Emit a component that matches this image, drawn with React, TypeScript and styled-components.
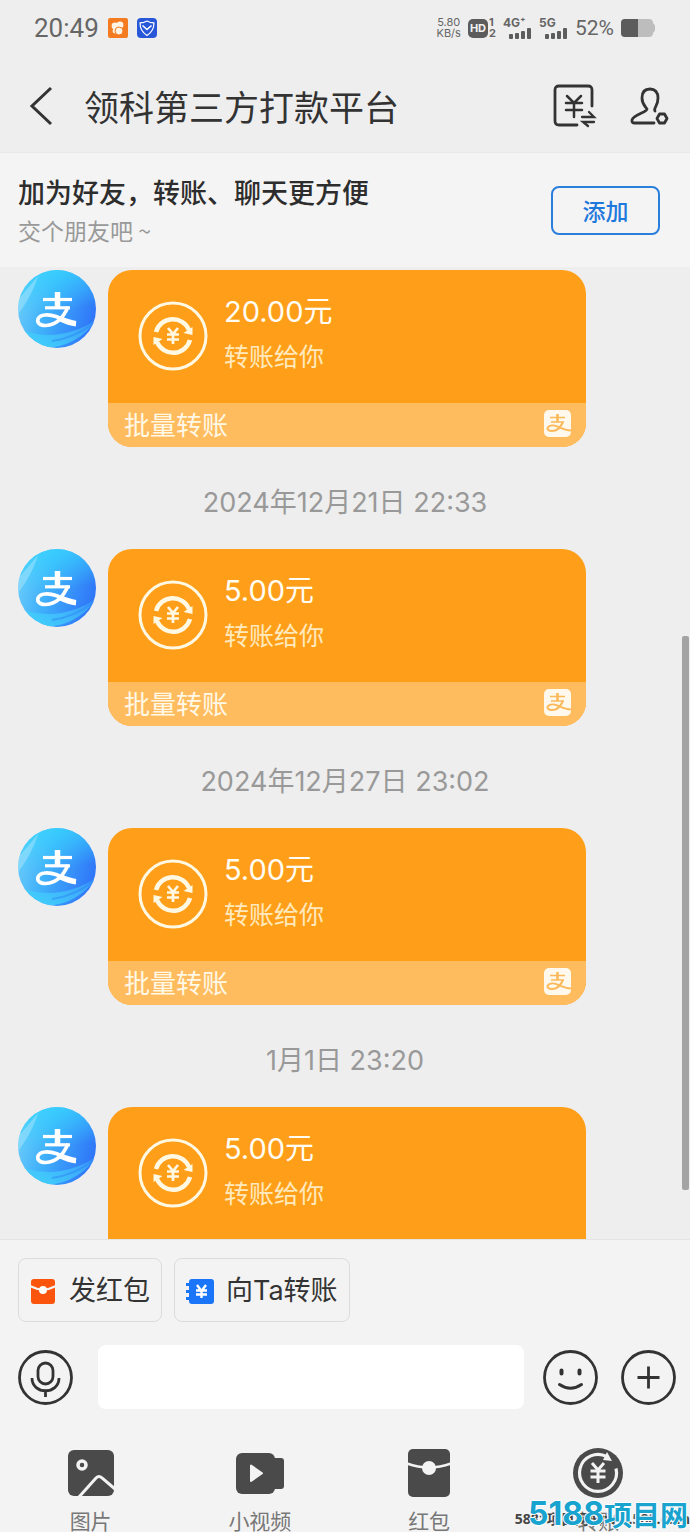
import React from "react";
import styled, { createGlobalStyle } from "styled-components";

const GlobalStyle = createGlobalStyle`
  *, *::before, *::after { box-sizing: border-box; }
  body {
    margin: 0;
    background: #eeeeee;
    color: #333333;
    font-family: "Noto Sans CJK SC", sans-serif;
  }
  button, input { font: inherit; color: inherit; }
  svg { display: block; flex: none; }
`;

const Screen = styled.div`
  position: relative;
  display: flex;
  flex-direction: column;
  height: 100vh;
  overflow: hidden;
`;

/* ---------- status bar ---------- */

const StatusBar = styled.div`
  display: flex;
  align-items: center;
  justify-content: space-between;
  flex: none;
  height: 56px;
  padding: 0 34px;
  color: #666666;
  font-family: Roboto, sans-serif;
`;

const StatusGroup = styled.div<{ $gap: number }>`
  display: flex;
  align-items: center;
  gap: ${(p) => p.$gap}px;
`;

const Clock = styled.time`
  font-size: 26px;
  line-height: 32px;
`;

const Speed = styled.div`
  display: flex;
  flex-direction: column;
  align-items: center;
  font-family: Inter, sans-serif;
  font-size: 11px;
  line-height: 11px;
`;

const HdGroup = styled.div`
  display: flex;
  align-items: center;
  gap: 1px;
  font-family: Inter, sans-serif;
  font-weight: 700;
`;

const HdBadge = styled.span`
  padding: 0 2px;
  border-radius: 5px;
  background: #5c5c5c;
  color: #f2f2f2;
  font-size: 11px;
  line-height: 19px;
`;

const SimNumbers = styled.span`
  display: flex;
  flex-direction: column;
  font-size: 11px;
  line-height: 11px;
`;

const Signal = styled.div`
  display: flex;
  flex-direction: column;
  width: 29px;
  font-family: Inter, sans-serif;
  font-size: 12px;
  font-weight: 700;
  line-height: 10px;

  svg { align-self: flex-end; }
`;

const Percent = styled.span`
  font-size: 21px;
  line-height: 24px;
`;

/* ---------- header ---------- */

const Header = styled.header`
  display: flex;
  align-items: center;
  flex: none;
  height: 97px;
  padding: 4px 20px 0 28px;
  border-bottom: 1px solid #e9e9e9;
`;

const IconButton = styled.button`
  display: flex;
  flex: none;
  padding: 0;
  border: 0;
  background: none;
`;

const Title = styled.h1`
  flex: 1;
  margin: 0 0 0 29px;
  font-size: 35px;
  font-weight: 400;
  line-height: 48px;
  white-space: nowrap;
`;

const HeaderActions = styled.div`
  display: flex;
  align-items: center;
  gap: 33px;
`;

/* ---------- add-friend banner ---------- */

const Banner = styled.section`
  display: flex;
  align-items: center;
  justify-content: space-between;
  flex: none;
  height: 114px;
  padding: 0 30px 0 18px;
  background: #f4f4f4;
`;

const BannerTitle = styled.p`
  margin: 0;
  font-size: 27px;
  font-weight: 500;
  line-height: 40px;
  color: #2d2d2d;
`;

const BannerNote = styled.p`
  margin: 0;
  font-size: 23px;
  line-height: 36px;
  color: #999999;
`;

const AddButton = styled.button`
  width: 109px;
  height: 49px;
  padding: 0;
  border: 2px solid #2b7fdc;
  border-radius: 8px;
  background: none;
  color: #1f78dc;
  font-size: 23px;
  font-weight: 500;
  line-height: 36px;
`;

/* ---------- conversation ---------- */

const Chat = styled.main`
  position: relative;
  flex: 1;
  min-height: 0;
  padding: 3px 104px 0 18px;
  overflow: hidden;
`;

const DateLine = styled.div`
  height: 102px;
  margin-right: -86px;
  padding-top: 36px;
  color: #999999;
  font-family: Inter, "Noto Sans CJK SC", sans-serif;
  font-size: 27px;
  line-height: 40px;
  text-align: center;
`;

const Message = styled.article`
  display: flex;
  align-items: flex-start;
  gap: 12px;
`;

const Card = styled.div`
  flex: 1;
  overflow: hidden;
  border-radius: 24px;
  background: #ff9f19;
  color: #fff8e6;
`;

const CardBody = styled.div`
  display: flex;
  gap: 16px;
  height: 133px;
  padding: 22px 30px 0;

  svg { margin-top: 9px; }
`;

const Amount = styled.p`
  margin: 0;
  font-family: Inter, "Noto Sans CJK SC", sans-serif;
  font-size: 29px;
  line-height: 40px;
  color: #fffdf4;
`;

const Note = styled.p`
  margin: 4px 0 0;
  font-size: 25px;
  line-height: 38px;
  color: #ffe9bd;
`;

const CardFooter = styled.div`
  display: flex;
  align-items: center;
  justify-content: space-between;
  height: 44px;
  padding: 0 15px 3px 16px;
  background: #ffbc5e;
  font-size: 26px;
  line-height: 40px;
`;

const ScrollThumb = styled.div`
  position: absolute;
  top: 38%;
  right: 1px;
  width: 7px;
  height: 57%;
  border-radius: 2px;
  background: #a3a3a3;
`;

/* ---------- composer ---------- */

const Composer = styled.footer`
  flex: none;
  padding: 18px 14px 0 18px;
  border-top: 1px solid #e4e4e4;
  background: #f3f3f3;
`;

const QuickActions = styled.div`
  display: flex;
  gap: 12px;
`;

const QuickButton = styled.button`
  display: flex;
  align-items: center;
  gap: 12px;
  height: 64px;
  padding: 2px 11px 0;
  border: 1px solid #dcdcdc;
  border-radius: 8px;
  background: none;
  font-family: Inter, "Noto Sans CJK SC", sans-serif;
  font-size: 27px;
  line-height: 40px;
`;

const InputRow = styled.form`
  display: flex;
  align-items: center;
  gap: 23px;
  margin-top: 23px;
`;

const MessageInput = styled.input`
  flex: 1;
  min-width: 0;
  height: 64px;
  margin: 0 -4px 0 2px;
  padding: 0 16px;
  border: 0;
  border-radius: 8px;
  background: #ffffff;
  font-size: 27px;
`;

const Tools = styled.nav`
  display: grid;
  grid-template-columns: repeat(4, 1fr);
  height: 123px;
  margin: 0 -7px 0 -12px;
  padding-top: 39px;
`;

const Tool = styled.button`
  display: flex;
  flex-direction: column;
  align-items: center;
  gap: 8px;
  padding: 0;
  border: 0;
  background: none;
  color: #777777;
  font-size: 21px;
  line-height: 28px;
`;

/* ---------- site watermark ---------- */

const Watermark = styled.div`
  position: absolute;
  right: 2px;
  bottom: 2px;
  display: flex;
  align-items: center;
  color: #19a3cf;
  font-size: 28px;
  font-weight: 700;
  line-height: 32px;
  white-space: nowrap;
  text-shadow: 1px 0 #ffffff, -1px 0 #ffffff, 0 1px #ffffff, 0 -1px #ffffff;
`;

const WatermarkDigits = styled.span`
  font-family: Inter, sans-serif;
  font-size: 32px;
`;

const WatermarkUrl = styled.div`
  position: absolute;
  right: 0;
  bottom: 4px;
  color: #444444;
  font-family: "Open Sans", "Noto Sans CJK SC", sans-serif;
  font-size: 14px;
  font-weight: 700;
  line-height: 18px;
  white-space: nowrap;
`;

/* ---------- drawings ---------- */

const WeatherAppIcon = () => (
  <svg width="20" height="20" viewBox="0 0 20 20">
    <rect width="20" height="20" rx="2" fill="#f47b20" />
    <circle cx="7" cy="8" r="3.4" fill="#fff3e4" />
    <circle cx="12" cy="7" r="3.4" fill="#fff3e4" />
    <circle cx="7" cy="13" r="2.4" fill="#fff3e4" />
    <circle cx="11" cy="13" r="4" fill="#fff3e4" stroke="#f47b20" strokeWidth="1" />
  </svg>
);

const ShieldAppIcon = () => (
  <svg width="20" height="20" viewBox="0 0 20 20" fill="none" stroke="#ffffff" strokeLinejoin="round">
    <rect width="20" height="20" rx="4" fill="#2858d8" stroke="none" />
    <path d="M10 3 13 4.300 17 4.800C17 11 14 15 10 17.500 6 15 3 11 3 4.800L7 4.300Z" strokeWidth="1.200" />
    <path d="m5.500 7.500 4.500 4 4.500-4" strokeWidth="1.600" />
  </svg>
);

const Bars = () => (
  <svg width="23" height="11" viewBox="0 0 23 11" fill="#5c5c5c">
    <rect y="6" width="4" height="5" rx="1" />
    <rect x="6" y="5" width="4" height="6" rx="1" />
    <rect x="12" y="3" width="4" height="8" rx="1" />
    <rect x="18" width="4" height="11" rx="1" />
  </svg>
);

const Battery = () => (
  <svg width="35" height="18" viewBox="0 0 35 18">
    <path d="M4 0h24q4 0 4 4l2 2.500v5L32 14q0 4-4 4H4q-4 0-4-4V4q0-4 4-4Z" fill="#bdbdbd" />
    <path d="M17 0H4Q0 0 0 4v10q0 4 4 4h13Z" fill="#5c5c5c" />
  </svg>
);

const BackIcon = () => (
  <svg width="27" height="40" viewBox="0 0 27 40" fill="none" stroke="#333333" strokeWidth="3">
    <path d="M23 2 4 20l19 18" />
  </svg>
);

const TransferListIcon = () => (
  <svg width="44" height="44" viewBox="0 0 44 44" fill="none" stroke="#333333" strokeWidth="2.800" strokeLinecap="round">
    <path d="M39 22V6q0-4-4-4H6Q2 2 2 6v31q0 4 4 4h18" />
    <path d="m14 12 7 7 7-7M13 19h16M13 26h16M21 19v14" strokeWidth="2.500" />
    <path d="M29 33h12l-5-5M41 38H30l5 4" strokeWidth="2.300" />
  </svg>
);

const ContactIcon = () => (
  <svg width="40" height="40" viewBox="0 0 40 40" fill="none" stroke="#333333" strokeWidth="2.800" strokeLinecap="round" strokeLinejoin="round">
    <path d="M25 25C23 22 28 21 28 12 28 6 25 3 20 3s-8 3-8 9c0 6 3 8 5 11 .5 3-14 6-15 11-.3 2 .6 3 2.500 3H24" />
    <path d="m29.500 28-2.500 4.500 2.500 4.500h5l2.500-4.500-2.500-4.500Z" />
  </svg>
);

const ZhiMark = ({ color }: { color: string }) => (
  <g fill="none" stroke={color} strokeLinecap="butt">
    <path d="M25 29.500h29" strokeWidth="3.200" />
    <path d="M39.500 22v15" strokeWidth="5.500" />
    <path d="M27 37.800h25" strokeWidth="3.200" />
    <path d="M50 37C46 46 39 55 28 55.500c-7 .3-9-3.500-8-6.500 2-5 11-5 18-2.500 6 2.500 12 6.500 20 7" strokeWidth="3.600" />
    <path d="M42 48.500c5 2.500 9 4.500 16 5.200" strokeWidth="5.500" />
  </g>
);

const Avatar = () => (
  <svg width="78" height="78" viewBox="0 0 78 78" role="img" aria-label="支付宝">
    <defs>
      <linearGradient id="avatarSky" x1="0" y1="0.3" x2="1" y2="0.6">
        <stop offset="0" stopColor="#6fcdfa" />
        <stop offset="0.4" stopColor="#3fb0fa" />
        <stop offset="1" stopColor="#2f74f8" />
      </linearGradient>
      <linearGradient id="avatarTop" x1="0" y1="0" x2="0.3" y2="1">
        <stop offset="0" stopColor="#35d4ff" stopOpacity="0.9" />
        <stop offset="1" stopColor="#35d4ff" stopOpacity="0" />
      </linearGradient>
      <linearGradient id="avatarWave" x1="0" y1="1" x2="1" y2="0">
        <stop offset="0" stopColor="#3fd6fc" />
        <stop offset="1" stopColor="#46b4fb" stopOpacity="0.5" />
      </linearGradient>
      <clipPath id="avatarDisc"><circle cx="39" cy="39" r="39" /></clipPath>
    </defs>
    <g clipPath="url(#avatarDisc)">
      <rect width="78" height="78" fill="url(#avatarSky)" />
      <rect width="78" height="44" fill="url(#avatarTop)" />
      <path d="M0 30 20 6C16 20 8 34 0 44Z" fill="#c4ebfc" opacity="0.4" />
      <path d="M0 58c24 12 54 8 78-8-12 18-30 28-56 28Z" fill="url(#avatarWave)" />
      <path d="M34 71c16-2 30-9 42-18" fill="none" stroke="#2a86f4" strokeWidth="2" opacity="0.5" />
    </g>
    <ZhiMark color="#ffffff" />
  </svg>
);

const PayBadge = () => (
  <svg width="27" height="27" viewBox="0 0 27 27">
    <rect width="27" height="27" rx="5" fill="#fff9ed" />
    <g fill="none" stroke="#fbb95a">
      <path d="M6 7.500h15M7 12h13" strokeWidth="1.600" />
      <path d="M13.500 4v8" strokeWidth="2.600" />
      <path d="M19 12c-2 4.500-6 9-11 9-4 0-5-2-4.200-3.600 1.500-2.600 6-2.500 10-.8 4 1.700 8 3.600 13.200 4" strokeWidth="2" />
    </g>
  </svg>
);

const TransferCircle = () => (
  <svg width="70" height="70" viewBox="0 0 70 70" fill="none" stroke="#fff8e2">
    <circle cx="35" cy="35" r="33" strokeWidth="3" />
    <path d="M18 31a17.500 17.500 0 0 1 33-2M52 39a17.500 17.500 0 0 1-33 2" strokeWidth="4.500" />
    <path d="M54.500 26v8l-9-2ZM15.500 44v-8l9 2Z" fill="#fff8e2" stroke="none" />
    <path d="m30 27 5 6 5-6M29 33.500h12M29 38.500h12M35 33v10" strokeWidth="2.700" />
  </svg>
);

const RedPacketIcon = () => (
  <svg width="27" height="27" viewBox="0 0 27 27">
    <rect x="1" y="1" width="24" height="25" rx="3" fill="#fb550d" />
    <path d="M0 8q13 7 26 0" fill="none" stroke="#f3f3f3" strokeWidth="2" />
    <circle cx="13" cy="12" r="4" fill="#ffffff" />
  </svg>
);

const TransferBookIcon = () => (
  <svg width="28" height="27" viewBox="0 0 28 27">
    <rect x="3" y="1" width="25" height="25" rx="3" fill="#1a75f8" />
    <path d="M0 6.500h4M0 13.500h4M0 20.500h4" stroke="#1a75f8" strokeWidth="3" />
    <path d="m11 7 4.500 6L20 7M10 12.500h11M10 16.500h11M15.500 12v8" fill="none" stroke="#ffffff" strokeWidth="2.400" />
  </svg>
);

const RoundIcon = ({ children }: { children: React.ReactNode }) => (
  <svg width="55" height="55" viewBox="0 0 55 55" fill="none" stroke="#333333" strokeWidth="2.800">
    <circle cx="27.500" cy="27.500" r="26" />
    {children}
  </svg>
);

const MicIcon = () => (
  <RoundIcon>
    <rect x="20" y="13" width="15" height="21" rx="7.500" />
    <path d="M14 28c0 17 27 17 27 0M27.500 41v6" />
  </RoundIcon>
);

const SmileIcon = () => (
  <RoundIcon>
    <path d="M18.500 20.500v3M36.500 20.500v3" strokeWidth="4" strokeLinecap="round" />
    <path d="M16.500 34.500q11 7.500 22 0" strokeWidth="3" strokeLinecap="round" />
  </RoundIcon>
);

const PlusIcon = () => (
  <RoundIcon>
    <path d="M16.500 27.500h22M27.500 16.500v22" />
  </RoundIcon>
);

const PictureIcon = () => (
  <svg width="50" height="50" viewBox="0 0 50 50">
    <rect x="2" y="2" width="46" height="46" rx="6" fill="#4a4a4a" />
    <circle cx="16" cy="17" r="4" fill="none" stroke="#f3f3f3" strokeWidth="3.500" />
    <path d="m13 49 17-19q3-3 6 0l13 11" fill="none" stroke="#f3f3f3" strokeWidth="3" />
  </svg>
);

const VideoIcon = () => (
  <svg width="50" height="50" viewBox="0 0 50 50" fill="#4a4a4a">
    <rect x="1" y="5" width="39" height="41" rx="6" />
    <rect x="36" y="10" width="13" height="31" rx="3" />
    <path d="M16 17.500v15.500l11-7.700Z" fill="#f3f3f3" stroke="#f3f3f3" strokeWidth="2" strokeLinejoin="round" />
  </svg>
);

const PacketIcon = () => (
  <svg width="50" height="50" viewBox="0 0 50 50">
    <rect x="4" y="1" width="42" height="48" rx="5" fill="#4a4a4a" />
    <path d="M3 15.500q22 8 44 0" fill="none" stroke="#f3f3f3" strokeWidth="2.600" />
    <circle cx="25" cy="20" r="7" fill="#f3f3f3" />
  </svg>
);

const TransferIcon = () => (
  <svg width="50" height="50" viewBox="0 0 50 50" fill="none" stroke="#f3f3f3">
    <circle cx="25" cy="25" r="25" fill="#4a4a4a" stroke="none" />
    <path d="M43 20.500A18.500 18.500 0 1 1 34 8.700" strokeWidth="3.200" />
    <path d="m34 4 5 9-9-1Z" fill="#f3f3f3" stroke="none" />
    <path d="m19 15 6 7 6-7M17.500 23h15M17.500 29h15M25 22v13" strokeWidth="3" />
  </svg>
);

/* ---------- page ---------- */

const transfers = [
  { amount: "20.00元" },
  { date: "2024年12月21日 22:33", amount: "5.00元" },
  { date: "2024年12月27日 23:02", amount: "5.00元" },
  { date: "1月1日 23:20", amount: "5.00元" },
];

const tools = [
  { label: "图片", Icon: PictureIcon },
  { label: "小视频", Icon: VideoIcon },
  { label: "红包", Icon: PacketIcon },
  { label: "转账", Icon: TransferIcon },
];

export default function App() {
  return (
    <Screen>
      <GlobalStyle />
      <StatusBar>
        <StatusGroup $gap={9}>
          <Clock>20:49</Clock>
          <WeatherAppIcon />
          <ShieldAppIcon />
        </StatusGroup>
        <StatusGroup $gap={7}>
          <Speed>
            <span>5.80</span>
            <span>KB/s</span>
          </Speed>
          <HdGroup>
            <HdBadge>HD</HdBadge>
            <SimNumbers>
              <span>1</span>
              <span>2</span>
            </SimNumbers>
          </HdGroup>
          <Signal>4G⁺<Bars /></Signal>
          <Signal>5G<Bars /></Signal>
          <Percent>52%</Percent>
          <Battery />
        </StatusGroup>
      </StatusBar>

      <Header>
        <IconButton aria-label="返回"><BackIcon /></IconButton>
        <Title>领科第三方打款平台</Title>
        <HeaderActions>
          <IconButton aria-label="转账记录"><TransferListIcon /></IconButton>
          <IconButton aria-label="联系人设置"><ContactIcon /></IconButton>
        </HeaderActions>
      </Header>

      <Banner>
        <div>
          <BannerTitle>加为好友，转账、聊天更方便</BannerTitle>
          <BannerNote>交个朋友吧 ~</BannerNote>
        </div>
        <AddButton>添加</AddButton>
      </Banner>

      <Chat>
        {transfers.map((t, i) => (
          <React.Fragment key={i}>
            {t.date && <DateLine>{t.date}</DateLine>}
            <Message>
              <Avatar />
              <Card>
                <CardBody>
                  <TransferCircle />
                  <div>
                    <Amount>{t.amount}</Amount>
                    <Note>转账给你</Note>
                  </div>
                </CardBody>
                <CardFooter>
                  <span>批量转账</span>
                  <PayBadge />
                </CardFooter>
              </Card>
            </Message>
          </React.Fragment>
        ))}
        <ScrollThumb />
      </Chat>

      <Composer>
        <QuickActions>
          <QuickButton><RedPacketIcon />发红包</QuickButton>
          <QuickButton><TransferBookIcon />向Ta转账</QuickButton>
        </QuickActions>
        <InputRow onSubmit={(e) => e.preventDefault()}>
          <IconButton type="button" aria-label="语音"><MicIcon /></IconButton>
          <MessageInput aria-label="消息" />
          <IconButton type="button" aria-label="表情"><SmileIcon /></IconButton>
          <IconButton type="button" aria-label="更多"><PlusIcon /></IconButton>
        </InputRow>
        <Tools>
          {tools.map(({ label, Icon }) => (
            <Tool key={label}><Icon />{label}</Tool>
          ))}
        </Tools>
      </Composer>

      <WatermarkUrl>5881项目网 www.588.com</WatermarkUrl>
      <Watermark>
        <WatermarkDigits>5188</WatermarkDigits>项目网
      </Watermark>
    </Screen>
  );
}
